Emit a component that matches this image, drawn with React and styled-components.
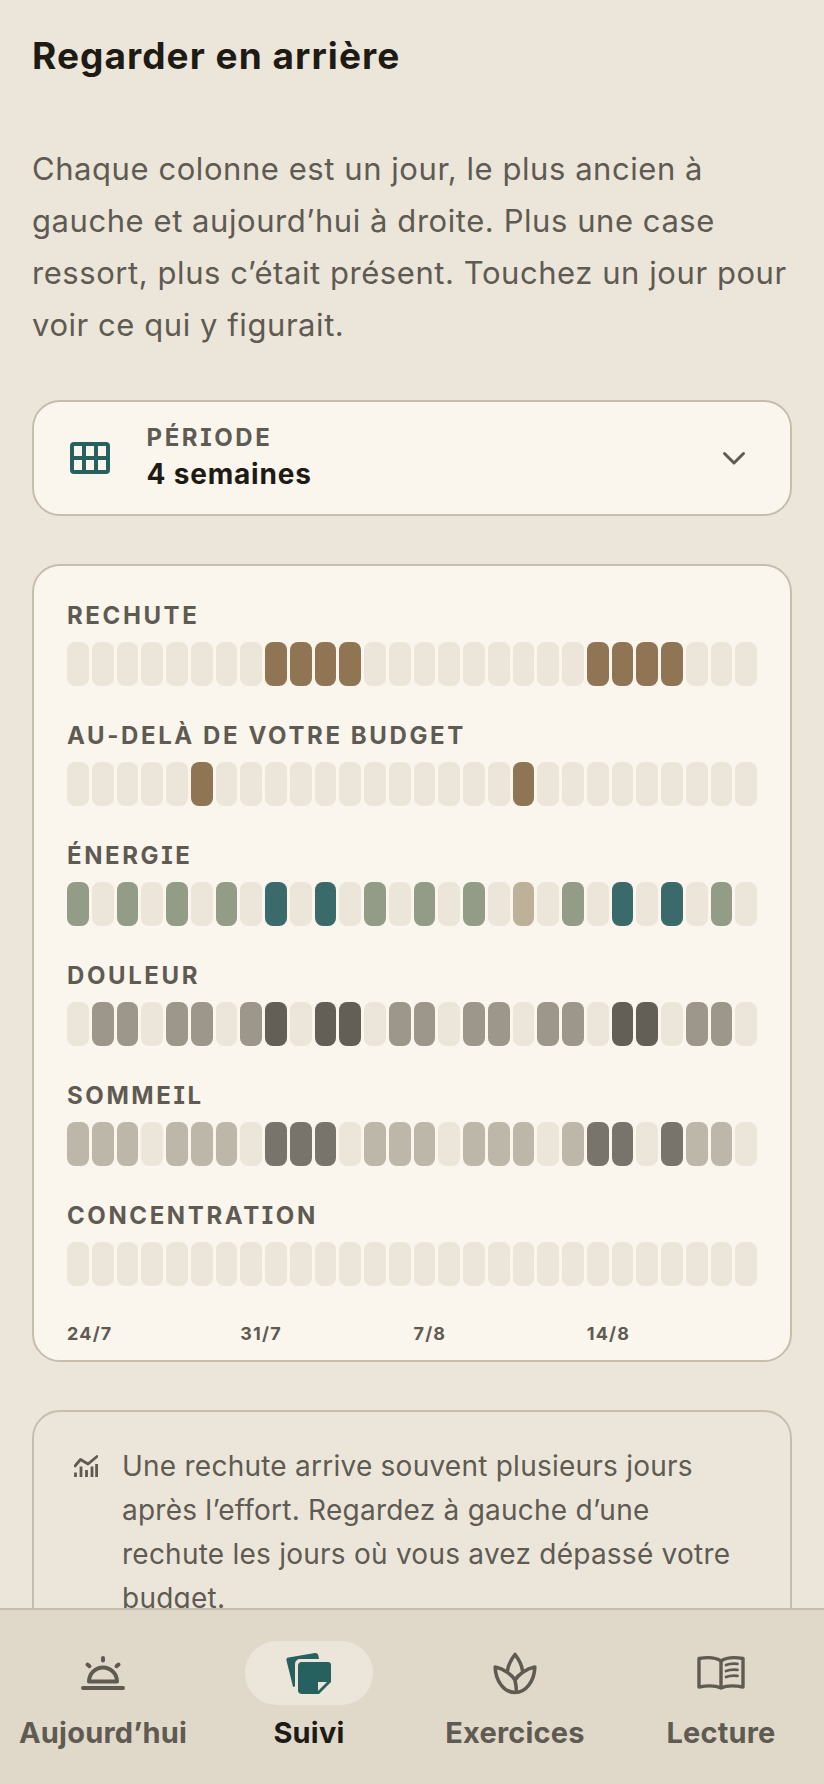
import styled, { createGlobalStyle } from 'styled-components';

const GlobalStyle = createGlobalStyle`
    html, body {
        margin: 0;
        padding: 0;
        height: 100%;
        overflow: hidden;
        background-color: #ece6da;
    }
    #root {
        height: 100%;
    }
`;

const Screen = styled.div`
    display: flex;
    flex-direction: column;
    height: 1784px;
    font-family: Inter, "Liberation Sans", sans-serif;
    color: #1e1a14;
`;

const Content = styled.main`
    flex: 1;
    min-height: 0;
    overflow: hidden;
    padding: 32px 32px 0;
`;

const Title = styled.h1`
    margin: 0;
    font-size: 37px;
    line-height: 48px;
    font-weight: 700;
    letter-spacing: 1.05px;
`;

const Intro = styled.p`
    margin: 63px 0 0;
    font-size: 31px;
    line-height: 52px;
    letter-spacing: 0.56px;
    color: #5f5a52;
`;

const Select = styled.div`
    display: flex;
    align-items: center;
    height: 116px;
    margin-top: 49px;
    padding: 0 44px 0 36px;
    box-sizing: border-box;
    background-color: #faf6ee;
    border: 2px solid #c6bdad;
    border-radius: 28px;
`;

const SelectText = styled.div`
    flex: 1;
    margin-left: 36.5px;
`;

const Label = styled.div`
    font-size: 24px;
    line-height: 28px;
    font-weight: 700;
    letter-spacing: 2.6px;
    color: #5f5a52;
    font-feature-settings: 'cv08';
`;

const SelectValue = styled.div`
    margin-top: 4px;
    font-size: 28px;
    line-height: 36px;
    font-weight: 700;
    letter-spacing: 0.8px;
    color: #1e1a14;
`;

const Card = styled.section`
    margin-top: 48px;
    padding: 36px 33px 0;
    height: 798px;
    box-sizing: border-box;
    background-color: #faf6ee;
    border: 2px solid #c6bdad;
    border-radius: 28px;
`;

const Track = styled.div`
    margin-bottom: 36px;
`;

const Cells = styled.div`
    display: grid;
    grid-template-columns: repeat(28, 1fr);
    column-gap: 3px;
    margin-top: 12px;
`;

const Cell = styled.div`
    height: 44px;
    border-radius: 8px;
    background-color: ${(p) => p.$color};
`;

const Axis = styled.div`
    display: grid;
    grid-template-columns: repeat(28, 1fr);
    column-gap: 3px;
    margin-top: 16px;
`;

const AxisLabel = styled.span`
    grid-column: span 7;
    font-size: 18px;
    line-height: 24px;
    font-weight: 700;
    letter-spacing: 1.2px;
    color: #5f5a52;
`;

const Note = styled.section`
    display: flex;
    align-items: flex-start;
    gap: 24px;
    margin-top: 48px;
    padding: 32px 50px 32px 40px;
    border: 2px solid #c6bdad;
    border-radius: 28px;
`;

const NoteText = styled.p`
    margin: 0;
    font-size: 28px;
    line-height: 44px;
    letter-spacing: 0.24px;
    color: #5f5a52;
`;

const ChartIcon = styled.svg`
    flex: none;
    margin-top: 9px;
`;

const Nav = styled.nav`
    flex: none;
    display: grid;
    grid-template-columns: repeat(4, 1fr);
    height: 176px;
    box-sizing: border-box;
    padding-top: 31px;
    background-color: #e0d9c9;
    border-top: 2px solid #c6bdad;
`;

const NavItem = styled.div`
    display: flex;
    flex-direction: column;
    align-items: center;
`;

const NavIcon = styled.div`
    display: flex;
    align-items: center;
    justify-content: center;
    width: 128px;
    height: 64px;
    border-radius: 32px;
    background-color: ${(p) => (p.$active ? '#ece6da' : 'transparent')};
`;

const NavLabel = styled.span`
    margin-top: 10px;
    font-size: 29px;
    line-height: 36px;
    font-weight: 700;
    letter-spacing: 0.2px;
    color: ${(p) => (p.$active ? '#1e1a14' : '#5f5a52')};
`;

const EMPTY = '#ece6da';
const palette = {
    '.': EMPTY,
    b: '#8f7553',
    g: '#939c87',
    t: '#3a6b6a',
    s: '#bdb298',
    m: '#9d978b',
    d: '#635e56',
    l: '#bdb7aa',
    k: '#78736b',
};

const tracks = [
    { name: 'RECHUTE', days: '........bbbb.........bbbb...' },
    { name: 'AU-DELÀ DE VOTRE BUDGET', days: '.....b............b.........' },
    { name: 'ÉNERGIE', days: 'g.g.g.g.t.t.g.g.g.s.g.t.t.g.' },
    { name: 'DOULEUR', days: '.mm.mm.md.dd.mm.mm.mm.dd.mm.' },
    { name: 'SOMMEIL', days: 'lll.lll.kkk.lll.lll.lkk.kll.' },
    { name: 'CONCENTRATION', days: '............................' },
];

function GridIcon() {
    return (
        <svg width="40" height="32" viewBox="0 0 40 32" fill="none" stroke="#27615f" strokeWidth="4">
            <rect x="2" y="2" width="36" height="28" rx="2" />
            <path d="M14 2V30M26 2V30M2 16H38" />
        </svg>
    );
}

function Chevron() {
    return (
        <svg width="24" height="16" viewBox="0 0 24 16" fill="none" stroke="#5f5a52" strokeWidth="3" strokeLinecap="round" strokeLinejoin="round">
            <path d="M2.5 3.5L12 13L21.5 3.5" />
        </svg>
    );
}

function TrendIcon() {
    return (
        <ChartIcon width="24" height="24" viewBox="0 0 24 24" fill="none" stroke="#5f5a52" strokeWidth="2.8">
            <path d="M1 13L6.5 6.5L14 11L23 3.5" strokeLinejoin="round" strokeLinecap="round" />
            <path d="M1.5 19.5V24M7 13.5V24M12.5 17V24M18 13.5V24M22.6 11V24" />
        </ChartIcon>
    );
}

function BellIcon() {
    return (
        <svg width="48" height="48" viewBox="0 0 48 48" fill="none" stroke="#5f5a52" strokeLinecap="round">
            <path d="M10 32.5a14 14 0 0 1 28 0z" strokeWidth="4" strokeLinejoin="round" />
            <path d="M4 39H44" strokeWidth="4" />
            <path d="M24 9V11.5M8.5 15.5L10.5 17.2M39.5 15.5L37.5 17.2" strokeWidth="4" />
        </svg>
    );
}

function NotesIcon() {
    return (
        <svg width="48" height="48" viewBox="0 0 48 48" fill="#27615f">
            <path d="M3.5 8.5L30 4a3 3 0 0 1 3.4 2.5L34 10H15a5 5 0 0 0-5 5V37L9 38a1 1 0 0 1-1.2-.9L1.5 11.5a2.5 2.5 0 0 1 2-3z" />
            <path d="M17 13H43a3 3 0 0 1 3 3V33L34 45H17a4 4 0 0 1-4-4V17a4 4 0 0 1 4-4z" />
            <path d="M33 33H42L33 42z" fill="#ece6da" />
        </svg>
    );
}

function LotusIcon() {
    return (
        <svg width="48" height="48" viewBox="0 0 48 48" fill="none" stroke="#5f5a52" strokeWidth="3.6" strokeLinejoin="round" strokeLinecap="round">
            <path d="M4.2 18C4.5 32 13 43.5 24 43.5C35 43.5 43.5 32 43.8 18C35 19.5 27 26 24 31C21 26 13 19.5 4.2 18z" />
            <path d="M16.5 21.5C17.5 14.5 20.5 10 24 5.5C27.5 10 30.5 14.5 31.5 21.5" />
            <path d="M24 31C24.8 35 25.4 39 25.4 43" />
        </svg>
    );
}

function BookIcon() {
    return (
        <svg width="48" height="48" viewBox="0 0 48 48" fill="none" stroke="#5f5a52" strokeWidth="3.4" strokeLinejoin="round" strokeLinecap="round">
            <path d="M24 12C19 8.5 11 8 2 9.5V38C10 36.5 19 36.5 24 39C29 36.5 38 36.5 46 38V9.5C37 8 29 8.5 24 12V38" />
            <path d="M29 16C32 14.8 36 14.3 40.5 14.8M29 22C32 20.8 36 20.3 40.5 20.8M29 28C32 26.8 36 26.3 40.5 26.8" strokeWidth="2.8" />
        </svg>
    );
}

const navItems = [
    { label: 'Aujourd’hui', icon: <BellIcon /> },
    { label: 'Suivi', icon: <NotesIcon />, active: true },
    { label: 'Exercices', icon: <LotusIcon /> },
    { label: 'Lecture', icon: <BookIcon /> },
];

function App() {
    return (
        <Screen>
            <GlobalStyle />
            <Content>
                <Title>Regarder en arrière</Title>
                <Intro>
                    Chaque colonne est un jour, le plus ancien à gauche et aujourd’hui à droite. Plus une case
                    ressort, plus c’était présent. Touchez un jour pour voir ce qui y figurait.
                </Intro>

                <Select>
                    <GridIcon />
                    <SelectText>
                        <Label>PÉRIODE</Label>
                        <SelectValue>4 semaines</SelectValue>
                    </SelectText>
                    <Chevron />
                </Select>

                <Card>
                    {tracks.map((track) => (
                        <Track key={track.name}>
                            <Label>{track.name}</Label>
                            <Cells>
                                {track.days.split('').map((day, i) => (
                                    <Cell key={i} $color={palette[day]} />
                                ))}
                            </Cells>
                        </Track>
                    ))}
                    <Axis>
                        <AxisLabel>24/7</AxisLabel>
                        <AxisLabel>31/7</AxisLabel>
                        <AxisLabel>7/8</AxisLabel>
                        <AxisLabel>14/8</AxisLabel>
                    </Axis>
                </Card>

                <Note>
                    <TrendIcon />
                    <NoteText>
                        Une rechute arrive souvent plusieurs jours après l’effort. Regardez à gauche d’une rechute
                        les jours où vous avez dépassé votre budget.
                    </NoteText>
                </Note>
            </Content>

            <Nav>
                {navItems.map((item) => (
                    <NavItem key={item.label}>
                        <NavIcon $active={item.active}>{item.icon}</NavIcon>
                        <NavLabel $active={item.active}>{item.label}</NavLabel>
                    </NavItem>
                ))}
            </Nav>
        </Screen>
    );
}

export default App;
